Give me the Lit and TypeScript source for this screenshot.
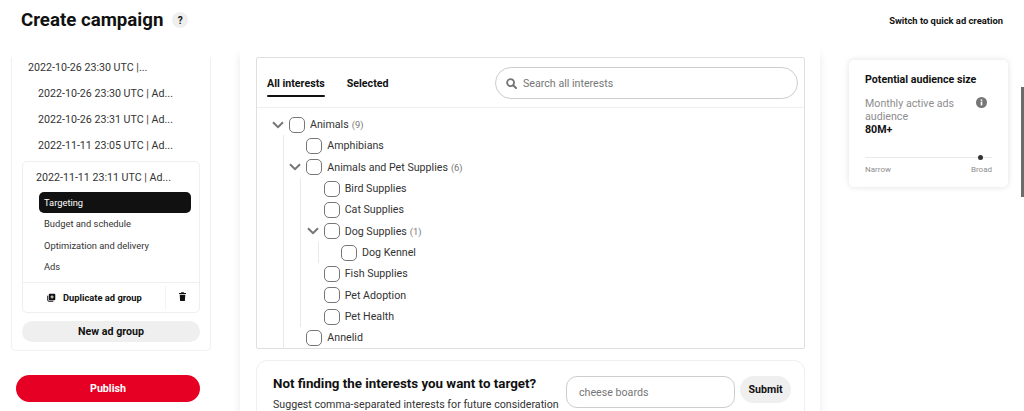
import { LitElement, html, css, TemplateResult } from "lit";
import { customElement } from "lit/decorators.js";

interface Node { label: string; count?: number; children?: Node[]; }

const TREE: Node[] = [
  {
    label: "Animals", count: 9, children: [
      { label: "Amphibians" },
      {
        label: "Animals and Pet Supplies", count: 6, children: [
          { label: "Bird Supplies" },
          { label: "Cat Supplies" },
          { label: "Dog Supplies", count: 1, children: [{ label: "Dog Kennel" }] },
          { label: "Fish Supplies" },
          { label: "Pet Adoption" },
          { label: "Pet Health" },
        ],
      },
      { label: "Annelid" },
    ],
  },
];

@customElement("app-root")
export class AppRoot extends LitElement {
  static styles = css`
    :host {
      display: block;
      width: 1024px;
      height: 411px;
      overflow: hidden;
      position: relative;
      background: #fff;
      color: #111;
      font-family: Roboto, "Liberation Sans", sans-serif;
    }
    * { box-sizing: border-box; }
    .header {
      height: 40px;
      display: flex;
      align-items: center;
      justify-content: space-between;
      padding: 0 21px;
    }
    .title-wrap { display: flex; align-items: center; gap: 9px; }
    h1 { margin: 0; font-size: 18.67px; font-weight: 700; line-height: 40px; color: #111; }
    .help {
      width: 16px; height: 16px; border-radius: 50%;
      background: #efefef; font-size: 10px; font-weight: 700;
      display: flex; align-items: center; justify-content: center;
    }
    .switch { font-size: 9.4px; font-weight: 700; }
    .main { display: flex; height: 371px; }
    .left { width: 240px; flex: none; padding: 17px 0 0 11px; }
    .nav-card {
      width: 200px; height: 294px;
      border: 1px solid #f0f0f0; border-top: none;
      border-radius: 0 0 5px 5px;
      padding: 0 10px;
    }
    .campaign { font-size: 10.67px; color: #333; height: 21px; line-height: 22px; padding-left: 6px; }
    .adgroup { font-size: 10.67px; color: #333; height: 26px; line-height: 26px; padding-left: 16px; }
    .campaign + .adgroup { margin-top: 3px; }
    .open {
      margin-top: 2px;
      width: 178px; height: 152px;
      border: 1px solid #efefef; border-radius: 5px;
      display: flex; flex-direction: column;
    }
    .open-title { font-size: 10.67px; color: #333; height: 30px; line-height: 32px; padding-left: 13px; }
    .steps { padding: 0 8px 0 16px; flex: 1; }
    .step { font-size: 9.33px; color: #333; height: 21.33px; line-height: 21.33px; padding-left: 5px; }
    .step.active { background: #111; color: #fff; border-radius: 5px; width: 152px; }
    .actions { display: flex; align-items: center; height: 30px; border-top: 1px solid #efefef; }
    .dup {
      flex: 1; height: 24px; display: flex; align-items: center; gap: 7px;
      padding-left: 24px; font-size: 9.33px; font-weight: 700;
      border-right: 1px solid #f3f3f3;
    }
    .dup svg { flex: none; }
    .trash { width: 33px; display: flex; justify-content: center; margin-top: -3px; }
    .new-group {
      margin-top: 8px; width: 178px; height: 21px; border-radius: 11px;
      background: #efefef; font-size: 10.67px; font-weight: 700;
      display: flex; align-items: center; justify-content: center;
    }
    .publish {
      margin: 24px 0 0 5px; width: 184px; height: 27px; border-radius: 14px;
      background: #e60023; color: #fff; font-size: 10.67px; font-weight: 700;
      display: flex; align-items: center; justify-content: center;
    }
    .center {
      width: 580px; flex: none; margin-top: 8px; padding: 9px 15px 0 16px;
      box-shadow: 0 6px 8px rgba(0,0,0,.09);
    }
    .box { height: 292px; border: 1px solid #dfdfdf; border-radius: 2px; }
    .tabs-row {
      height: 50px; display: flex; align-items: center; padding: 0 6px 0 10px;
      border-bottom: 1px solid #efefef;
    }
    .tabs { display: flex; gap: 22px; height: 100%; flex: 1; }
    .tab { font-size: 10.67px; font-weight: 700; height: 100%; line-height: 51px; position: relative; }
    .tab.active::after {
      content: ""; position: absolute; left: 0; right: 0; bottom: 10px;
      height: 2px; background: #111; border-radius: 1px;
    }
    .search {
      width: 303px; height: 32px; border: 1px solid #cdcdcd; border-radius: 16px;
      display: flex; align-items: center; gap: 6px; padding: 1px 0 0 10px;
      font-size: 10.67px; color: #767676;
    }
    .tree { height: 241px; overflow: hidden; padding: 6px 0 0 15px; }
    .row { display: flex; align-items: center; height: 21.33px; }
    .chev { width: 12px; height: 12px; flex: none; margin-right: 5px; }
    .spacer { width: 17px; flex: none; }
    .check {
      width: 16px; height: 16px; flex: none; margin-right: 5px;
      border: 1px solid #767676; border-radius: 5px; background: #fff;
    }
    .label { font-size: 10.67px; color: #333; }
    .count { font-size: 9.33px; color: #767676; margin-left: 3px; }
    .kids { margin-left: 11px; border-left: 1px solid #e9e9e9; padding-left: 5.33px; }
    .suggest {
      margin-top: 11px; height: 80px; border: 1px solid #efefef; border-radius: 11px;
      display: flex; padding: 15px 13px 0 16px;
    }
    .suggest-text { flex: 1; }
    .suggest-text h2 { margin: 0; font-size: 13.33px; font-weight: 700; line-height: 16px; }
    .suggest-text p { margin: 6px 0 0; font-size: 10.67px; color: #333; line-height: 14px; white-space: nowrap; }
    .suggest-input {
      width: 169px; height: 32px; border: 1px solid #cdcdcd; border-radius: 11px;
      font-size: 10.67px; color: #767676; display: flex; align-items: center; padding-left: 12px;
    }
    .submit {
      margin-left: 5px; width: 51px; height: 27px; border-radius: 14px; background: #efefef;
      font-size: 10.67px; font-weight: 700; display: flex; align-items: center; justify-content: center;
    }
    .right { flex: 1; padding: 20px 0 0 29px; }
    .aud {
      width: 159px; height: 127px; border-radius: 5px; padding: 13px 16px 0 16px;
      box-shadow: 0 0 6px rgba(0,0,0,.12);
    }
    .aud h3 { margin: 0; font-size: 10.67px; font-weight: 700; line-height: 14px; }
    .aud-info { display: flex; justify-content: space-between; margin-top: 10px; }
    .aud-label { font-size: 10.67px; color: #8e8e8e; line-height: 13px; width: 100px; }
    .info { margin: 0 5px 0 0; }
    .aud-value { font-size: 10.67px; font-weight: 700; line-height: 13px; }
    .slider { margin-top: 21px; height: 1px; background: #e9e9e9; position: relative; }
    .dot {
      position: absolute; right: 9px; top: -2px; width: 5px; height: 5px;
      border-radius: 50%; background: #333;
    }
    .scale { display: flex; justify-content: space-between; margin-top: 7px; font-size: 8px; color: #8e8e8e; }
    .scrollbar {
      position: absolute; right: 0; top: 87px; width: 3px; height: 110px; background: #6b6b6b;
    }
  `;

  private chevron() {
    return html`<svg class="chev" viewBox="0 0 12 12"><path d="M1 3.2 6 8.2 11 3.2" fill="none" stroke="#767676" stroke-width="2"/></svg>`;
  }

  private renderNode(n: Node): TemplateResult {
    return html`
      <div class="row">
        ${n.children ? this.chevron() : html`<span class="spacer"></span>`}
        <span class="check"></span>
        <span class="label">${n.label}</span>
        ${n.count ? html`<span class="count">(${n.count})</span>` : ""}
      </div>
      ${n.children ? html`<div class="kids">${n.children.map((c) => this.renderNode(c))}</div>` : ""}
    `;
  }

  render() {
    return html`
      <div class="header">
        <div class="title-wrap"><h1>Create campaign</h1><span class="help">?</span></div>
        <span class="switch">Switch to quick ad creation</span>
      </div>
      <div class="main">
        <div class="left">
          <div class="nav-card">
            <div class="campaign">2022-10-26 23:30 UTC |...</div>
            <div class="adgroup">2022-10-26 23:30 UTC | Ad...</div>
            <div class="adgroup">2022-10-26 23:31 UTC | Ad...</div>
            <div class="adgroup">2022-11-11 23:05 UTC | Ad...</div>
            <div class="open">
              <div class="open-title">2022-11-11 23:11 UTC | Ad...</div>
              <div class="steps">
                <div class="step active">Targeting</div>
                <div class="step">Budget and schedule</div>
                <div class="step">Optimization and delivery</div>
                <div class="step">Ads</div>
              </div>
              <div class="actions">
                <div class="dup">
                  <svg width="9" height="9" viewBox="0 0 10 10"><path d="M3 0.8h5.2A1 1 0 0 1 9.2 1.8V7a1 1 0 0 1-1 1H3a1 1 0 0 1-1-1V1.8a1 1 0 0 1 1-1Z" fill="#111"/><path d="M0.8 3v5a1.2 1.2 0 0 0 1.2 1.2h5" fill="none" stroke="#111" stroke-width="1.1"/><path d="M5.6 2.6v3.6M3.8 4.4h3.6" stroke="#fff" stroke-width="1"/></svg>
                  Duplicate ad group
                </div>
                <div class="trash">
                  <svg width="7" height="9" viewBox="0 0 8 10"><path d="M2.6 0h2.8l.4 1H8v1.2H0V1h2.2ZM.8 3h6.4L6.7 10H1.3Z" fill="#111"/></svg>
                </div>
              </div>
            </div>
            <div class="new-group">New ad group</div>
          </div>
          <div class="publish">Publish</div>
        </div>
        <div class="center">
          <div class="box">
            <div class="tabs-row">
              <div class="tabs">
                <div class="tab active">All interests</div>
                <div class="tab">Selected</div>
              </div>
              <div class="search">
                <svg width="11" height="11" viewBox="0 0 11 11"><circle cx="4.6" cy="4.6" r="3.5" fill="none" stroke="#767676" stroke-width="1.8"/><path d="M7.2 7.2 10 10" stroke="#767676" stroke-width="2" stroke-linecap="round"/></svg>
                Search all interests
              </div>
            </div>
            <div class="tree">${TREE.map((n) => this.renderNode(n))}</div>
          </div>
          <div class="suggest">
            <div class="suggest-text">
              <h2>Not finding the interests you want to target?</h2>
              <p>Suggest comma-separated interests for future consideration</p>
            </div>
            <div class="suggest-input">cheese boards</div>
            <div class="submit">Submit</div>
          </div>
        </div>
        <div class="right">
          <div class="aud">
            <h3>Potential audience size</h3>
            <div class="aud-info">
              <div class="aud-label">Monthly active ads audience</div>
              <svg class="info" width="11" height="11" viewBox="0 0 11 11"><circle cx="5.5" cy="5.5" r="5.5" fill="#767676"/><rect x="4.7" y="4.6" width="1.6" height="3.8" fill="#fff"/><rect x="4.7" y="2.4" width="1.6" height="1.5" fill="#fff"/></svg>
            </div>
            <div class="aud-value">80M+</div>
            <div class="slider"><span class="dot"></span></div>
            <div class="scale"><span>Narrow</span><span>Broad</span></div>
          </div>
        </div>
      </div>
      <div class="scrollbar"></div>
    `;
  }
}
